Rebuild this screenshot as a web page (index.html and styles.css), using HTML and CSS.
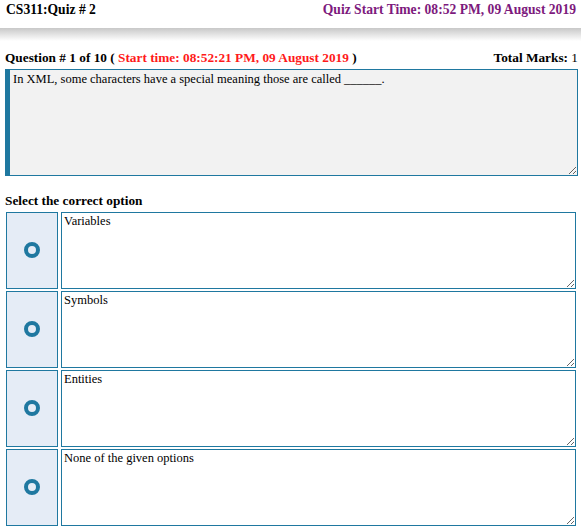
FILE: index.html
```html
<!doctype html>
<html>

<head>
    <title>Quiz</title>
    <meta charset="utf-8">
    <link rel="stylesheet" href="styles.css">
</head>

<body>
    <header class="topbar">
        <span class="course">CS311:Quiz # 2</span>
        <span class="quiztime">Quiz Start Time: 08:52 PM, 09 August 2019</span>
    </header>
    <div class="shade"></div>
    <section class="question">
        <div class="qhead">
            <span>Question # 1 of 10 ( <span class="start">Start time: 08:52:21 PM, 09 August 2019</span> )</span>
            <span>Total Marks: <span class="marks">1</span></span>
        </div>
        <textarea class="qtext" readonly>In XML, some characters have a special meaning those are called ______.</textarea>
    </section>
    <h3 class="select">Select the correct option</h3>
    <div class="options">
        <div class="option">
            <div class="radio"><span class="ring"></span></div>
            <textarea class="otext" readonly>Variables</textarea>
        </div>
        <div class="option">
            <div class="radio"><span class="ring"></span></div>
            <textarea class="otext" readonly>Symbols</textarea>
        </div>
        <div class="option">
            <div class="radio"><span class="ring"></span></div>
            <textarea class="otext" readonly>Entities</textarea>
        </div>
        <div class="option">
            <div class="radio"><span class="ring"></span></div>
            <textarea class="otext" readonly>None of the given options</textarea>
        </div>
    </div>
</body>

</html>
```

FILE: styles.css
```css
body {
    margin: 0;
    font-family: "Liberation Serif", "Times New Roman", serif;
    color: #000;
    background: #fff;
}

.topbar {
    display: flex;
    justify-content: space-between;
    align-items: center;
    height: 20px;
    padding: 0 5px 0 6px;
    font-weight: bold;
    font-size: 13.6px;
}

.quiztime {
    color: #7d1a7d;
}

.shade {
    height: 13px;
    margin-top: 8px;
    background: linear-gradient(#c8c8c8, #ffffff);
}

.question {
    padding: 0 3px 0 5px;
    margin-top: 6px;
}

.qhead {
    display: flex;
    justify-content: space-between;
    font-weight: bold;
    font-size: 13.3px;
    height: 22px;
    align-items: center;
}

.marks {
    font-weight: normal;
    color: #000;
}

.start {
    color: #ff1a1a;
}

.qtext {
    display: block;
    box-sizing: border-box;
    width: 100%;
    height: 107px;
    margin: 0;
    padding: 2px 3px;
    border: 1px solid #1f78a0;
    border-left: 5px solid #1f78a0;
    background: #f2f2f2;
    font-family: "Liberation Serif", "Times New Roman", serif;
    font-size: 12.5px;
    resize: vertical;
    outline: none;
}

.select {
    margin: 17px 0 0 5px;
    font-size: 13.3px;
    height: 18px;
}

.options {
    display: flex;
    flex-direction: column;
    gap: 2px;
    padding: 0 5px 0 6px;
    margin-top: 1px;
}

.option {
    display: flex;
    gap: 3px;
    height: 77px;
}

.radio {
    box-sizing: border-box;
    width: 52px;
    border: 1px solid #1f78a0;
    background: #e5ecf6;
    display: flex;
    align-items: center;
    justify-content: center;
    padding-bottom: 1px;
}

.ring {
    box-sizing: border-box;
    width: 16px;
    height: 16px;
    border: 4px solid #1f78a0;
    border-radius: 50%;
}

.otext {
    box-sizing: border-box;
    flex: 1;
    height: 77px;
    margin: 0;
    padding: 1px 2px;
    border: 1px solid #1f78a0;
    background: #fff;
    font-family: "Liberation Serif", "Times New Roman", serif;
    font-size: 12.5px;
    resize: vertical;
    outline: none;
}
```
